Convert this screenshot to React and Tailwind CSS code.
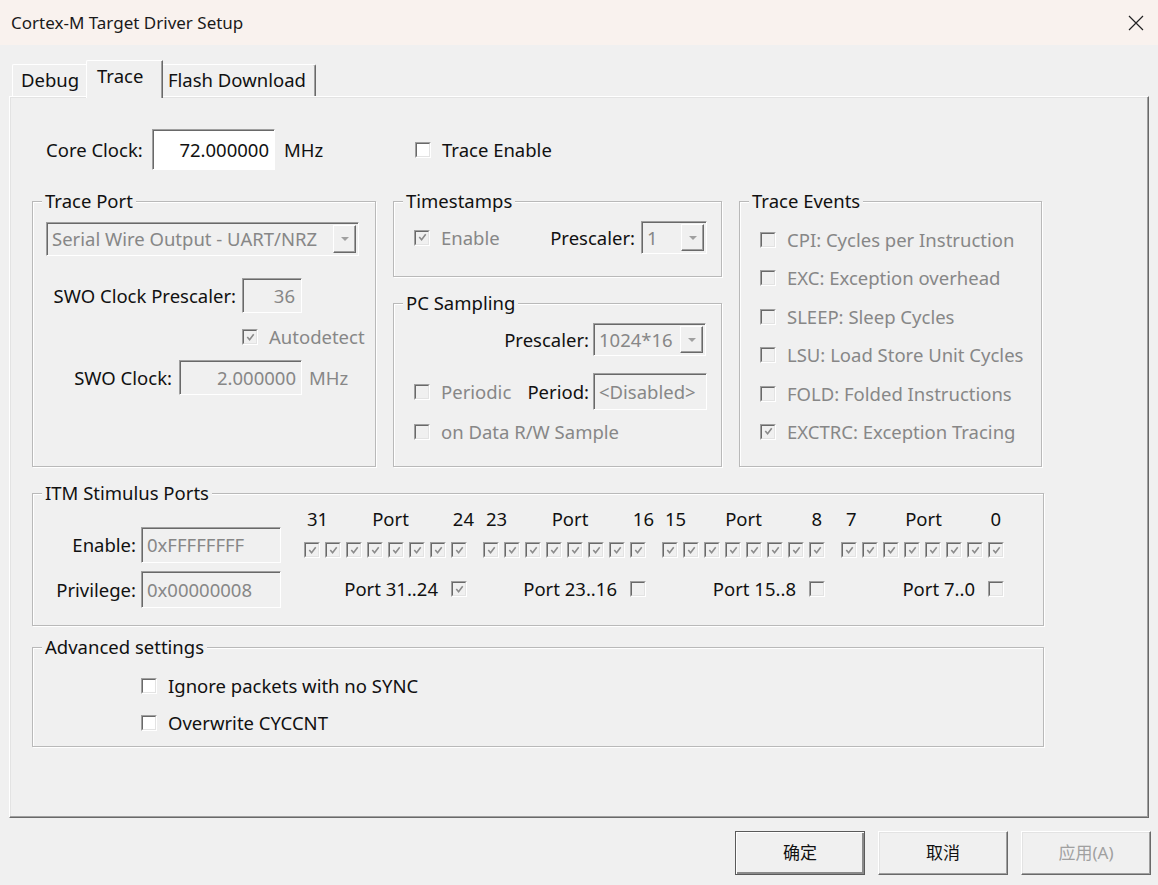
import React from "react";

const ui = "font-['Noto_Sans','Noto_Sans_CJK_SC',sans-serif]";
const dim = "text-[#878787]";

const Tick = () => (
  <svg viewBox="0 0 12 12" className="h-[11px] w-[11px]">
    <polyline
      points="2.5,5.5 5,8.5 9.5,2.5"
      fill="none"
      stroke="#8a8a8a"
      strokeWidth="1.7"
    />
  </svg>
);

const Check = ({ checked, disabled }) => (
  <span className="flex h-[16px] w-[16px] shrink-0 border border-t-[#a0a0a0] border-l-[#a0a0a0] border-r-white border-b-white">
    <span
      className={`flex flex-1 items-center justify-center border border-t-[#696969] border-l-[#696969] border-r-[#e3e3e3] border-b-[#e3e3e3] ${
        disabled ? "bg-[#f0f0f0]" : "bg-white"
      }`}
    >
      {checked && <Tick />}
    </span>
  </span>
);

const CheckItem = ({ checked, disabled, children }) => (
  <div className="flex items-center">
    <Check checked={checked} disabled={disabled} />
    <span className={`ml-[11px] whitespace-nowrap ${disabled ? dim : ""}`}>
      {children}
    </span>
  </div>
);

const Sunken = ({ className = "", children }) => (
  <div
    className={`flex shrink-0 items-center border border-t-[#a0a0a0] border-l-[#a0a0a0] border-r-white border-b-white shadow-[inset_1px_1px_0_#696969] ${className}`}
  >
    {children}
  </div>
);

const Combo = ({ value, className = "" }) => (
  <Sunken className={`pl-[5px] pr-[2px] ${className}`}>
    <span className={`flex-1 whitespace-nowrap ${dim}`}>{value}</span>
    <span className="flex h-[calc(100%-4px)] w-[23px] items-center justify-center border border-t-white border-l-white border-r-[#696969] border-b-[#696969] shadow-[inset_-1px_-1px_0_#a0a0a0]">
      <svg viewBox="0 0 8 4" className="h-[4px] w-[8px]">
        <polygon points="0,0 8,0 4,4" fill="#a0a0a0" />
      </svg>
    </span>
  </Sunken>
);

const Group = ({ title, className = "", children }) => (
  <div
    className={`relative shrink-0 border border-[#b9b9b9] shadow-[1px_1px_0_#fff,inset_1px_1px_0_#fff] ${className}`}
  >
    <span className="absolute -top-[13px] left-[9px] whitespace-nowrap bg-[#f0f0f0] px-[3px] leading-[24px]">
      {title}
    </span>
    {children}
  </div>
);

const portGroups = [
  { hi: "31", lo: "24", label: "Port 31..24", all: true, hdr: "pl-[3px] -mr-[7px]" },
  { hi: "23", lo: "16", label: "Port 23..16", all: false, hdr: "pl-[3px] -mr-[8px]" },
  { hi: "15", lo: "8", label: "Port 15..8", all: false, hdr: "pl-[3px] pr-[3px]" },
  { hi: "7", lo: "0", label: "Port 7..0", all: false, hdr: "pl-[5px] pr-[3px]" },
];

const traceEvents = [
  ["CPI: Cycles per Instruction", false],
  ["EXC: Exception overhead", false],
  ["SLEEP: Sleep Cycles", false],
  ["LSU: Load Store Unit Cycles", false],
  ["FOLD: Folded Instructions", false],
  ["EXCTRC: Exception Tracing", true],
];

const TitleBar = () => (
  <div className="flex h-[45px] items-center justify-between bg-[#f9f2ee] pl-[11px] pr-[14px]">
    <span className="text-[17px] text-[#1a1a1a]">Cortex-M Target Driver Setup</span>
    <svg viewBox="0 0 16 16" className="h-[16px] w-[16px]">
      <path d="M1 1L15 15M15 1L1 15" stroke="#222" strokeWidth="1.2" />
    </svg>
  </div>
);

const Tabs = () => (
  <div className="relative z-10 flex items-end pl-[12px] pt-[15px]">
    <div className="h-[32px] w-[76px] rounded-tl-[2px] border-l border-t border-white pl-[8px] pt-[3px]">
      Debug
    </div>
    <div className="relative z-10 -mx-[2px] -mb-[2px] h-[38px] w-[77px] rounded-tl-[2px] border-l border-t border-r border-l-white border-t-white border-r-[#696969] bg-[#f0f0f0] pl-[10px] pt-[3px] shadow-[inset_-1px_0_0_#a0a0a0]">
      Trace
    </div>
    <div className="h-[32px] w-[155px] rounded-tr-[2px] border-t border-r border-t-white border-r-[#696969] pl-[7px] pt-[3px] shadow-[inset_-1px_0_0_#a0a0a0]">
      Flash Download
    </div>
  </div>
);

const TracePort = () => (
  <Group title="Trace Port" className="h-[266px] w-[344px]">
    <Combo value="Serial Wire Output - UART/NRZ" className="ml-[13px] mt-[20px] h-[34px] w-[313px]" />
    <div className="ml-[13px] mt-[22px] flex h-[35px] items-center">
      <span className="w-[190px] whitespace-nowrap text-right">SWO Clock Prescaler:</span>
      <Sunken className={`ml-[6px] h-[35px] w-[60px] justify-end pr-[6px] ${dim}`}>36</Sunken>
    </div>
    <div className="ml-[209px] mt-[16px] flex h-[16px] items-center">
      <CheckItem checked disabled>Autodetect</CheckItem>
    </div>
    <div className="ml-[13px] mt-[15px] flex h-[35px] items-center">
      <span className="w-[126px] whitespace-nowrap text-right">SWO Clock:</span>
      <Sunken className={`ml-[7px] h-[35px] w-[123px] justify-end pr-[5px] ${dim}`}>2.000000</Sunken>
      <span className={`ml-[7px] ${dim}`}>MHz</span>
    </div>
  </Group>
);

const Timestamps = () => (
  <Group title="Timestamps" className="h-[76px] w-[329px]">
    <div className="mt-[19px] flex h-[33px] items-center pl-[20px] pr-[14px]">
      <CheckItem checked disabled>Enable</CheckItem>
      <span className="ml-auto">Prescaler:</span>
      <Combo value="1" className="ml-[6px] h-[33px] w-[66px]" />
    </div>
  </Group>
);

const PcSampling = () => (
  <Group title="PC Sampling" className="mt-[26px] h-[164px] w-[329px]">
    <div className="mt-[19px] flex h-[33px] items-center justify-end pr-[15px]">
      <span>Prescaler:</span>
      <Combo value="1024*16" className="ml-[4px] h-[33px] w-[113px]" />
    </div>
    <div className="mt-[17px] flex h-[37px] items-center pl-[20px] pr-[14px]">
      <CheckItem disabled>Periodic</CheckItem>
      <span className="ml-auto">Period:</span>
      <Sunken className={`ml-[4px] h-[37px] w-[114px] pl-[5px] ${dim}`}>&lt;Disabled&gt;</Sunken>
    </div>
    <div className="mt-[14px] flex h-[16px] items-center pl-[20px]">
      <CheckItem disabled>on Data R/W Sample</CheckItem>
    </div>
  </Group>
);

const TraceEvents = () => (
  <Group title="Trace Events" className="h-[266px] w-[303px]">
    <div className="mt-[26px] flex flex-col gap-[14.4px] pl-[20px]">
      {traceEvents.map(([label, on]) => (
        <div key={label} className="flex h-[24px] items-center">
          <CheckItem checked={on} disabled>
            {label}
          </CheckItem>
        </div>
      ))}
    </div>
  </Group>
);

const StimulusPorts = () => (
  <Group title="ITM Stimulus Ports" className="mt-[26px] h-[133px] w-[1012px]">
    <div className="flex">
      <div className="flex flex-col">
        <div className="mt-[33px] flex h-[36px] items-center">
          <span className="w-[103px] text-right">Enable:</span>
          <Sunken className={`ml-[5px] h-[36px] w-[140px] pl-[5px] ${dim}`}>0xFFFFFFFF</Sunken>
        </div>
        <div className="mt-[8px] flex h-[37px] items-center">
          <span className="w-[103px] text-right">Privilege:</span>
          <Sunken className={`ml-[5px] h-[37px] w-[140px] pl-[5px] ${dim}`}>0x00000008</Sunken>
        </div>
      </div>
      <div className="ml-[23px] flex gap-[16px]">
        {portGroups.map((g) => (
          <div key={g.hi} className="flex w-[163px] flex-col">
            <div className={`mt-[13px] grid h-[24px] grid-cols-[1fr_auto_1fr] ${g.hdr}`}>
              <span>{g.hi}</span>
              <span>Port</span>
              <span className="text-right">{g.lo}</span>
            </div>
            <div className="mt-[11px] flex gap-[5px]">
              {Array.from({ length: 8 }, (_, i) => (
                <Check key={i} checked disabled />
              ))}
            </div>
            <div className="mt-[23px] flex h-[16px] items-center justify-end">
              <span className="whitespace-nowrap">{g.label}</span>
              <span className="ml-[13px]">
                <Check checked={g.all} disabled />
              </span>
            </div>
          </div>
        ))}
      </div>
    </div>
  </Group>
);

const Advanced = () => (
  <Group title="Advanced settings" className="mt-[21px] h-[100px] w-[1012px]">
    <div className="ml-[108px] mt-[30px] flex h-[16px] items-center">
      <CheckItem>Ignore packets with no SYNC</CheckItem>
    </div>
    <div className="ml-[108px] mt-[21px] flex h-[16px] items-center">
      <CheckItem>Overwrite CYCCNT</CheckItem>
    </div>
  </Group>
);

const Panel = () => (
  <div className="ml-[9px] h-[722px] w-[1140px] border border-t-white border-l-white border-r-[#696969] border-b-[#696969] pl-[22px] pt-[32px] shadow-[inset_-1px_-1px_0_#a0a0a0,inset_1px_1px_0_#e3e3e3]">
    <div className="flex h-[41px] items-center">
      <div className="flex w-[383px] items-center">
        <span className="ml-[14px] w-[101px] whitespace-nowrap">Core Clock:</span>
        <Sunken className="ml-[5px] h-[41px] w-[123px] justify-end bg-white pr-[5px]">72.000000</Sunken>
        <span className="ml-[9px]">MHz</span>
      </div>
      <CheckItem>Trace Enable</CheckItem>
    </div>

    <div className="mt-[31px] flex items-start gap-[17px]">
      <TracePort />
      <div className="flex flex-col">
        <Timestamps />
        <PcSampling />
      </div>
      <TraceEvents />
    </div>

    <StimulusPorts />
    <Advanced />
  </div>
);

const DialogButton = ({ children, isDefault, disabled }) => (
  <button
    className={`h-[44px] w-[130px] text-[17px] ${
      isDefault
        ? "border border-[#5a5a5a] shadow-[inset_1px_1px_0_#fff,inset_-2px_-2px_0_#8a8a8a]"
        : "border border-t-white border-l-white border-r-[#696969] border-b-[#696969] shadow-[inset_-1px_-1px_0_#a0a0a0,inset_1px_1px_0_#e3e3e3]"
    } ${disabled ? "text-[#a0a0a0]" : "text-[#111]"}`}
  >
    {children}
  </button>
);

export default function App() {
  return (
    <div className={`h-[885px] w-[1158px] overflow-hidden bg-[#f0f0f0] text-[18.5px] leading-[24px] text-[#111] ${ui}`}>
      <TitleBar />
      <Tabs />
      <Panel />
      <div className="flex justify-end gap-[13px] pr-[7px] pt-[13px]">
        <DialogButton isDefault>确定</DialogButton>
        <DialogButton>取消</DialogButton>
        <DialogButton disabled>应用(A)</DialogButton>
      </div>
    </div>
  );
}
